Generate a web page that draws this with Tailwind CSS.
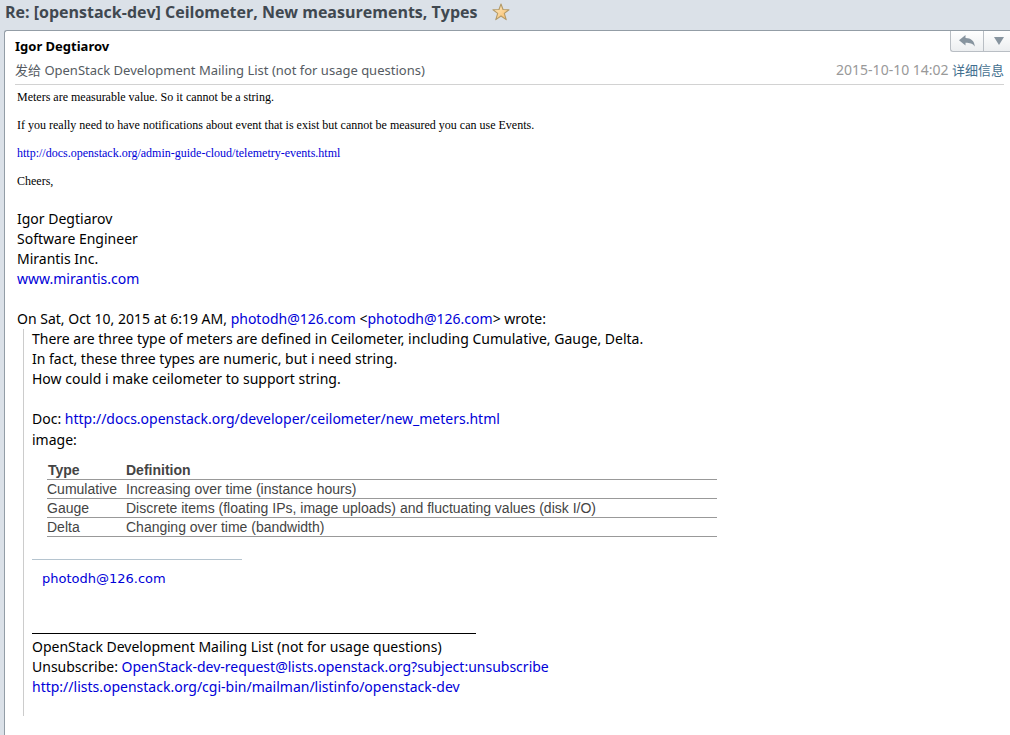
<!DOCTYPE html>
<html lang="zh-CN">
<head>
<meta charset="utf-8">
<meta name="viewport" content="width=device-width, initial-scale=1">
<title>Re: [openstack-dev] Ceilometer, New measurements, Types</title>
<script src="https://cdn.jsdelivr.net/npm/@tailwindcss/browser@4"></script>
</head>
<body class="flex min-h-screen flex-col bg-[#dbe1e8] font-['Noto_Sans','Noto_Sans_CJK_SC',sans-serif] text-sm leading-5 text-black">
<header class="flex h-[30px] items-start gap-[14px] pl-[5px]">
  <h1 class="font-['Open_Sans',sans-serif] text-base leading-6 font-bold text-[#404850]">Re: [openstack-dev] Ceilometer, New measurements, Types</h1>
  <button type="button" aria-label="星标" class="mt-[2px]">
    <svg class="size-5" viewBox="0 0 20 20"><defs><linearGradient id="gold" x1="0" y1="0" x2="1" y2="1"><stop offset="0" stop-color="#fff0cc"/><stop offset="1" stop-color="#f8b860"/></linearGradient></defs><path d="M10 2 12 7.5 18 7.7 13.3 11.4 15.2 17.6 10 14 4.8 17.6 6.7 11.4 2 7.7 8 7.5Z" fill="url(#gold)" stroke="#b39a68" stroke-width="1.1" stroke-linejoin="round"/></svg>
  </button>
</header>
<main class="ml-1 flex-1 rounded-tl-[3px] border-t border-l border-[#939da6] bg-white">
  <section class="relative mr-[6px] ml-[10px] border-b border-[#d2d2d2] pt-[5px] pb-1">
    <h2 class="mb-1 text-[13px] leading-5 font-bold">Igor Degtiarov</h2>
    <div class="flex justify-between text-[13px]">
      <p class="text-[#555b62]">发给 OpenStack Development Mailing List (not for usage questions)</p>
      <p class="text-[#999]"><time class="text-sm leading-5">2015-10-10 14:02</time> <a href="#" class="text-[#44708f]">详细信息</a></p>
    </div>
    <div class="absolute top-0 -right-[6px] flex h-[21px] rounded-bl-[3px] border-b border-l border-[#b9bec4] bg-linear-to-b from-white to-[#eceef0]">
      <button type="button" aria-label="回复" class="flex w-8 items-center justify-center">
        <svg class="h-3 w-4" viewBox="0 0 16 12"><path d="M6.5 0V3C12 3 15.4 6 15.8 11.4 13.6 8.4 11 7.7 6.5 7.7V10.5L0 5.3Z" fill="#87949f"/></svg>
      </button>
      <button type="button" aria-label="更多" class="flex w-[27px] items-center justify-center border-l border-[#b9bec4]">
        <svg class="ml-1 h-2 w-[10px]" viewBox="0 0 10 8"><path d="M0 0H10L5 8Z" fill="#87949f"/></svg>
      </button>
    </div>
  </section>

  <article class="pr-4 pl-3">
    <div class="flex flex-col gap-3 pt-1 font-['Liberation_Serif',serif] text-xs leading-4">
      <p>Meters are measurable value. So it cannot be a string.</p>
      <p>If you really need to have notifications about event that is exist but cannot be measured you can use Events.</p>
      <p><a href="#" class="text-[#0000d8]">http://docs.openstack.org/admin-guide-cloud/telemetry-events.html</a></p>
      <p>Cheers,</p>
    </div>
    <address class="mt-5 not-italic">
      <p>Igor Degtiarov</p>
      <p>Software Engineer</p>
      <p>Mirantis Inc.</p>
      <p><a href="#" class="text-[#0000d8]">www.mirantis.com</a></p>
    </address>
    <p class="mt-5">On Sat, Oct 10, 2015 at 6:19 AM, <a href="#" class="text-[#0000d8]">photodh@126.com</a> &lt;<a href="#" class="text-[#0000d8]">photodh@126.com</a>&gt; wrote:</p>
    <blockquote class="ml-[6px] border-l border-[#ccc] pb-[19px] pl-2">
      <p>There are three type of meters are defined in Ceilometer, including Cumulative, Gauge, Delta.</p>
      <p>In fact, these three types are numeric, but i need string.</p>
      <p>How could i make ceilometer to support string.</p>
      <p class="mt-5">Doc: <a href="#" class="text-[#0000d8]">http://docs.openstack.org/developer/ceilometer/new_meters.html</a></p>
      <p class="mt-px">image:</p>
      <table class="mt-[11px] ml-[15px] w-[670px] max-w-full border-collapse text-left font-['Liberation_Sans',sans-serif] text-sm leading-[18px] text-[#444]">
        <thead>
          <tr class="border-b border-[#999]"><th class="w-[79px] pl-px font-bold">Type</th><th class="font-bold">Definition</th></tr>
        </thead>
        <tbody>
          <tr class="border-b border-[#999]"><td>Cumulative</td><td>Increasing over time (instance hours)</td></tr>
          <tr class="border-b border-[#999]"><td>Gauge</td><td>Discrete items (floating IPs, image uploads) and fluctuating values (disk I/O)</td></tr>
          <tr class="border-b border-[#999]"><td>Delta</td><td>Changing over time (bandwidth)</td></tr>
        </tbody>
      </table>
      <hr class="mt-[22px] w-[210px] border-[#b5c4cf]">
      <p class="mt-[9px] ml-[10px] font-['DejaVu_Sans',sans-serif] text-[13px]"><a href="#" class="text-[#0000d8]">photodh@126.com</a></p>
      <hr class="mt-11 mb-[3px] w-[444px] border-black">
      <p>OpenStack Development Mailing List (not for usage questions)</p>
      <p>Unsubscribe: <a href="#" class="text-[#0000d8]">OpenStack-dev-request@lists.openstack.org?subject:unsubscribe</a></p>
      <p><a href="#" class="text-[#0000d8]">http://lists.openstack.org/cgi-bin/mailman/listinfo/openstack-dev</a></p>
    </blockquote>
  </article>
</main>
</body>
</html>
